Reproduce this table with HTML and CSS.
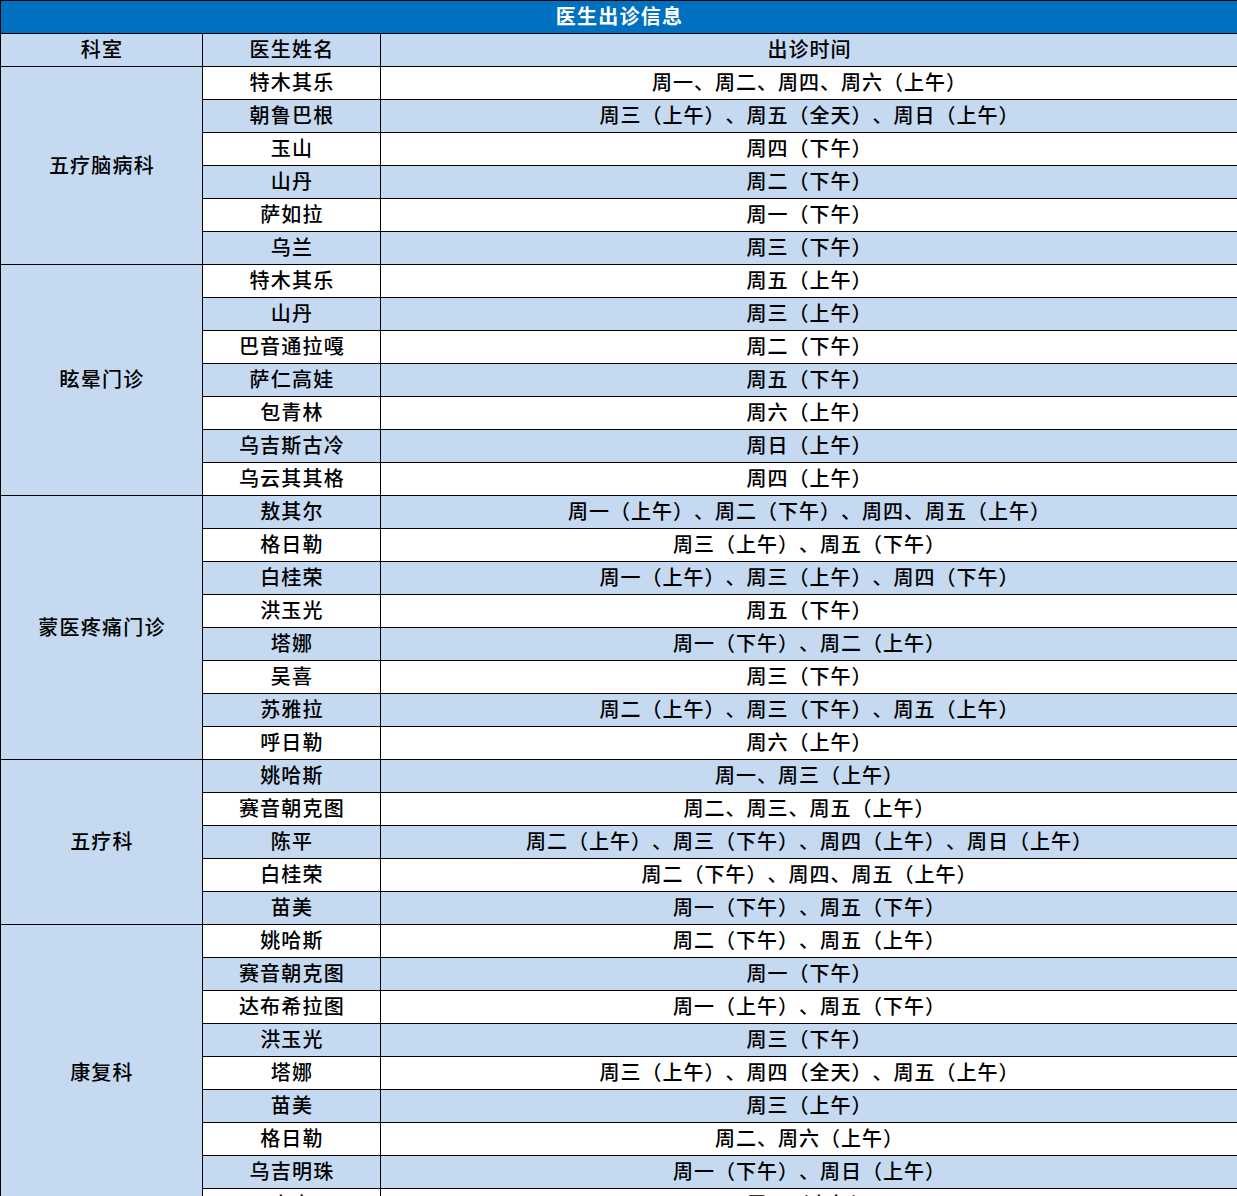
FILE: index.html
```html
<!DOCTYPE html>
<html lang="zh">
<head>
<meta charset="utf-8">
<title>医生出诊信息</title>
<link rel="stylesheet" href="styles.css">
</head>
<body>
<table class="schedule">
  <colgroup>
    <col class="c-dept">
    <col class="c-name">
    <col class="c-time">
  </colgroup>
  <thead>
    <tr class="title"><th colspan="3">医生出诊信息</th></tr>
    <tr class="head"><th>科室</th><th>医生姓名</th><th class="time">出诊时间</th></tr>
  </thead>
  <tbody>
    <tr><td class="dept" rowspan="6">五疗脑病科</td><td>特木其乐</td><td class="time">周一、周二、周四、周六（上午）</td></tr>
    <tr class="alt"><td>朝鲁巴根</td><td class="time">周三（上午）、周五（全天）、周日（上午）</td></tr>
    <tr><td>玉山</td><td class="time">周四（下午）</td></tr>
    <tr class="alt"><td>山丹</td><td class="time">周二（下午）</td></tr>
    <tr><td>萨如拉</td><td class="time">周一（下午）</td></tr>
    <tr class="alt"><td>乌兰</td><td class="time">周三（下午）</td></tr>

    <tr><td class="dept" rowspan="7">眩晕门诊</td><td>特木其乐</td><td class="time">周五（上午）</td></tr>
    <tr class="alt"><td>山丹</td><td class="time">周三（上午）</td></tr>
    <tr><td>巴音通拉嘎</td><td class="time">周二（下午）</td></tr>
    <tr class="alt"><td>萨仁高娃</td><td class="time">周五（下午）</td></tr>
    <tr><td>包青林</td><td class="time">周六（上午）</td></tr>
    <tr class="alt"><td>乌吉斯古冷</td><td class="time">周日（上午）</td></tr>
    <tr><td>乌云其其格</td><td class="time">周四（上午）</td></tr>

    <tr class="alt"><td class="dept" rowspan="8">蒙医疼痛门诊</td><td>敖其尔</td><td class="time">周一（上午）、周二（下午）、周四、周五（上午）</td></tr>
    <tr><td>格日勒</td><td class="time">周三（上午）、周五（下午）</td></tr>
    <tr class="alt"><td>白桂荣</td><td class="time">周一（上午）、周三（上午）、周四（下午）</td></tr>
    <tr><td>洪玉光</td><td class="time">周五（下午）</td></tr>
    <tr class="alt"><td>塔娜</td><td class="time">周一（下午）、周二（上午）</td></tr>
    <tr><td>吴喜</td><td class="time">周三（下午）</td></tr>
    <tr class="alt"><td>苏雅拉</td><td class="time">周二（上午）、周三（下午）、周五（上午）</td></tr>
    <tr><td>呼日勒</td><td class="time">周六（上午）</td></tr>

    <tr class="alt"><td class="dept" rowspan="5">五疗科</td><td>姚哈斯</td><td class="time">周一、周三（上午）</td></tr>
    <tr><td>赛音朝克图</td><td class="time">周二、周三、周五（上午）</td></tr>
    <tr class="alt"><td>陈平</td><td class="time">周二（上午）、周三（下午）、周四（上午）、周日（上午）</td></tr>
    <tr><td>白桂荣</td><td class="time">周二（下午）、周四、周五（上午）</td></tr>
    <tr class="alt"><td>苗美</td><td class="time">周一（下午）、周五（下午）</td></tr>

    <tr><td class="dept" rowspan="9">康复科</td><td>姚哈斯</td><td class="time">周二（下午）、周五（上午）</td></tr>
    <tr class="alt"><td>赛音朝克图</td><td class="time">周一（下午）</td></tr>
    <tr><td>达布希拉图</td><td class="time">周一（上午）、周五（下午）</td></tr>
    <tr class="alt"><td>洪玉光</td><td class="time">周三（下午）</td></tr>
    <tr><td>塔娜</td><td class="time">周三（上午）、周四（全天）、周五（上午）</td></tr>
    <tr class="alt"><td>苗美</td><td class="time">周三（上午）</td></tr>
    <tr><td>格日勒</td><td class="time">周二、周六（上午）</td></tr>
    <tr class="alt"><td>乌吉明珠</td><td class="time">周一（下午）、周日（上午）</td></tr>
    <tr><td>小春</td><td class="time">周三（上午）</td></tr>
  </tbody>
</table>
</body>
</html>
```

FILE: styles.css
```css
html, body {
  margin: 0;
  padding: 0;
  background: #ffffff;
}

.schedule {
  width: 1237px;
  border-collapse: collapse;
  table-layout: fixed;
  font-family: "Noto Sans CJK SC", "Microsoft YaHei", sans-serif;
  font-size: 20px;
  font-weight: 500;
  color: #000000;
  text-spacing-trim: space-all;
}

.c-dept { width: 202px; }
.c-name { width: 178px; }
.c-time { width: 857px; }

.schedule th,
.schedule td {
  border: 1px solid #000000;
  height: 30px;
  padding: 0 0 2px 1px;
  text-align: center;
  vertical-align: middle;
  line-height: 30px;
  letter-spacing: 1.25px;
  white-space: nowrap;
  overflow: hidden;
}

.schedule .time {
  letter-spacing: 1px;
}

.title th {
  background: #0070c0;
  color: #ffffff;
  font-weight: 700;
}

.head th {
  background: #c5d9f1;
  font-weight: 500;
}

.alt td {
  background: #c5d9f1;
}

.schedule td.dept {
  background: #c5d9f1;
}
```
